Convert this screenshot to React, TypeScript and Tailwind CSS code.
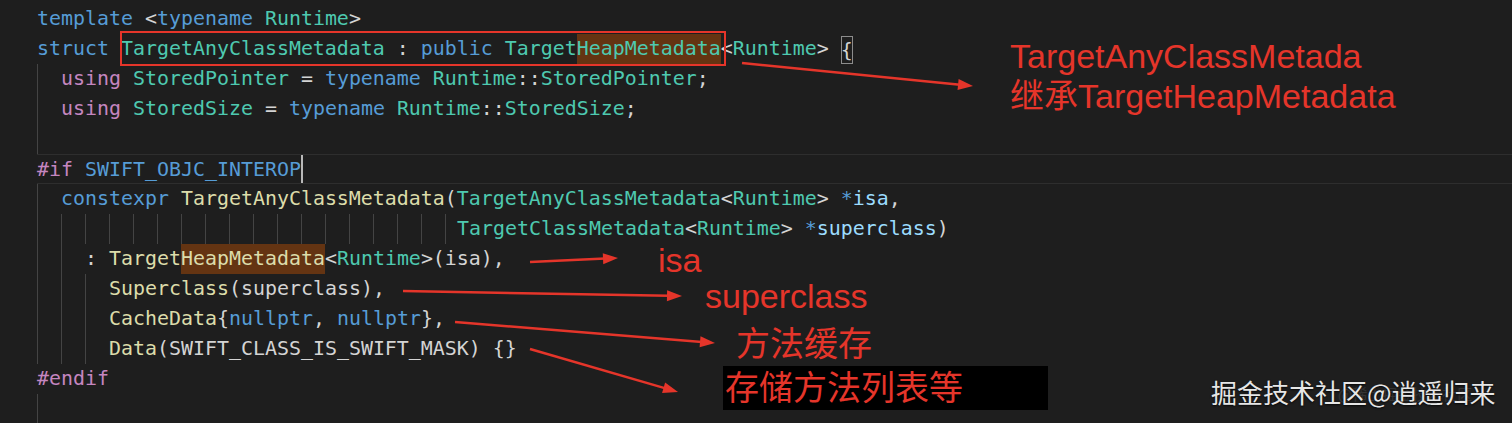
type Kind = 'k' | 't' | 'f' | 'v' | 'p' | 'c';
type Tok = [Kind, string, ('hl' | 'br')?];

const tone: Record<Kind, string> = {
  k: 'text-[#569cd6]',
  t: 'text-[#4ec9b0]',
  f: 'text-[#dcdcaa]',
  v: 'text-[#9cdcfe]',
  p: 'text-[#d4d4d4]',
  c: 'text-[#c586c0]',
};

function Guides({ n, tail }: { n: number; tail?: boolean }) {
  return (
    <>
      {Array.from({ length: n }).map((_, i) => (
        <span key={i} className="inline-block w-[24px] h-[30px] align-top border-l border-[#444444]" />
      ))}
      {tail && <span className="inline-block w-[12px] h-[30px] align-top border-l border-[#444444]" />}
    </>
  );
}

function Code({ toks }: { toks: Tok[] }) {
  return (
    <>
      {toks.map(([k, s, x], i) => {
        if (x === 'hl')
          return (
            <span key={i} className={`inline-block h-[30px] align-top bg-[#643412] ${tone[k]}`}>
              {s}
            </span>
          );
        if (x === 'br')
          return (
            <span key={i} className={`inline-block w-[12px] h-[28px] align-middle outline outline-1 -outline-offset-1 outline-[#8c8c8c] ${tone[k]}`}>
              {s}
            </span>
          );
        return (
          <span key={i} className={tone[k]}>
            {s}
          </span>
        );
      })}
    </>
  );
}

function Line({ children, current }: { children?: React.ReactNode; current?: boolean }) {
  return (
    <div
      className={`ml-[37px] h-[30px] leading-[30px] whitespace-pre ${current ? 'border-y border-[#2e2e2e]' : ''}`}
    >
      {children}
    </div>
  );
}

function Arrow({ x1, y1, x2, y2 }: { x1: number; y1: number; x2: number; y2: number }) {
  const dx = x2 - x1;
  const dy = y2 - y1;
  const len = Math.hypot(dx, dy);
  const ux = dx / len;
  const uy = dy / len;
  const hl = 15;
  const hw = 5.5;
  const bx = x2 - ux * hl;
  const by = y2 - uy * hl;
  return (
    <g>
      <line x1={x1} y1={y1} x2={bx + ux * 2} y2={by + uy * 2} stroke="#e5352a" strokeWidth={2.5} />
      <polygon
        points={`${x2},${y2} ${bx - uy * hw},${by + ux * hw} ${bx + uy * hw},${by - ux * hw}`}
        fill="#e5352a"
      />
    </g>
  );
}

const note = "absolute text-[34px] leading-[34px] text-[#e5352a] font-['Liberation_Sans','Noto_Sans_CJK_SC',sans-serif] whitespace-nowrap";

export default function App() {
  return (
    <div className="relative w-[1512px] h-[423px] overflow-hidden bg-[#1e1e1e]">
      <div className="pt-[4px] text-[19.93px] font-['DejaVu_Sans_Mono',monospace]">
        <Line>
          <Code toks={[['k', 'template'], ['p', ' <'], ['k', 'typename'], ['p', ' '], ['t', 'Runtime'], ['p', '>']]} />
        </Line>
        <Line>
          <Code
            toks={[
              ['k', 'struct'],
              ['p', ' '],
              ['t', 'TargetAnyClassMetadata'],
              ['p', ' : '],
              ['k', 'public'],
              ['p', ' '],
              ['t', 'Target'],
              ['t', 'HeapMetadata', 'hl'],
              ['p', '<'],
              ['t', 'Runtime'],
              ['p', '> '],
              ['p', '{', 'br'],
            ]}
          />
        </Line>
        <Line>
          <Guides n={1} />
          <Code
            toks={[
              ['c', 'using'],
              ['p', ' '],
              ['t', 'StoredPointer'],
              ['p', ' = '],
              ['k', 'typename'],
              ['p', ' '],
              ['t', 'Runtime'],
              ['p', '::'],
              ['t', 'StoredPointer'],
              ['p', ';'],
            ]}
          />
        </Line>
        <Line>
          <Guides n={1} />
          <Code
            toks={[
              ['c', 'using'],
              ['p', ' '],
              ['t', 'StoredSize'],
              ['p', ' = '],
              ['k', 'typename'],
              ['p', ' '],
              ['t', 'Runtime'],
              ['p', '::'],
              ['t', 'StoredSize'],
              ['p', ';'],
            ]}
          />
        </Line>
        <Line>
          <Guides n={1} />
        </Line>
        <Line current>
          <Code toks={[['c', '#if'], ['p', ' '], ['k', 'SWIFT_OBJC_INTEROP']]} />
          <span className="inline-block w-[2px] h-[28px] align-top bg-[#b8b8b8]" />
        </Line>
        <Line>
          <Guides n={1} />
          <Code
            toks={[
              ['k', 'constexpr'],
              ['p', ' '],
              ['f', 'TargetAnyClassMetadata'],
              ['p', '('],
              ['t', 'TargetAnyClassMetadata'],
              ['p', '<'],
              ['t', 'Runtime'],
              ['p', '> '],
              ['k', '*'],
              ['v', 'isa'],
              ['p', ','],
            ]}
          />
        </Line>
        <Line>
          <Guides n={17} tail />
          <Code
            toks={[
              ['t', 'TargetClassMetadata'],
              ['p', '<'],
              ['t', 'Runtime'],
              ['p', '> '],
              ['k', '*'],
              ['v', 'superclass'],
              ['p', ')'],
            ]}
          />
        </Line>
        <Line>
          <Guides n={2} />
          <Code
            toks={[
              ['p', ': '],
              ['f', 'Target'],
              ['f', 'HeapMetadata', 'hl'],
              ['p', '<'],
              ['t', 'Runtime'],
              ['p', '>(isa),'],
            ]}
          />
        </Line>
        <Line>
          <Guides n={3} />
          <Code toks={[['f', 'Superclass'], ['p', '(superclass),']]} />
        </Line>
        <Line>
          <Guides n={3} />
          <Code
            toks={[
              ['f', 'CacheData'],
              ['p', '{'],
              ['k', 'nullptr'],
              ['p', ', '],
              ['k', 'nullptr'],
              ['p', '},'],
            ]}
          />
        </Line>
        <Line>
          <Guides n={3} />
          <Code toks={[['f', 'Data'], ['p', '(SWIFT_CLASS_IS_SWIFT_MASK) {}']]} />
        </Line>
        <Line>
          <Code toks={[['c', '#endif']]} />
        </Line>
        <Line>
          <Guides n={1} />
        </Line>
      </div>

      <svg className="absolute inset-0 pointer-events-none" width={1512} height={423}>
        <rect x={121} y={32} width={604} height={33} fill="none" stroke="#e5352a" strokeWidth={2} />
        <Arrow x1={742} y1={63} x2={973} y2={86} />
        <Arrow x1={530} y1={262} x2={618} y2={258} />
        <Arrow x1={403} y1={291} x2={682} y2={296} />
        <Arrow x1={455} y1={322} x2={715} y2={343} />
        <Arrow x1={530} y1={349} x2={678} y2={392} />
      </svg>

      <div className={`${note} left-[1010px] top-[39px]`}>TargetAnyClassMetada</div>
      <div className={`${note} left-[1010px] top-[79px]`}>继承TargetHeapMetadata</div>
      <div className={`${note} left-[658px] top-[243px]`}>isa</div>
      <div className={`${note} left-[705px] top-[279px]`}>superclass</div>
      <div className={`${note} left-[736px] top-[327px]`}>方法缓存</div>
      <div className="absolute left-[723px] top-[366px] w-[325px] h-[44px] bg-black">
        <div className={`${note} left-[2px] top-[5px]`}>存储方法列表等</div>
      </div>

      <div className="absolute left-[1338px] top-[386px] text-[15px] leading-[15px] text-white/10 font-['Noto_Sans_CJK_SC',sans-serif] whitespace-nowrap">
        @稀土掘金技术社区
      </div>
      <div className="absolute left-[1211px] top-[379px] text-[26px] leading-[26px] text-[#e6e6e6] font-['Noto_Sans_CJK_SC',sans-serif] whitespace-nowrap [text-shadow:0_1px_2px_rgba(0,0,0,0.8)]">
        掘金技术社区@逍遥归来
      </div>
    </div>
  );
}
